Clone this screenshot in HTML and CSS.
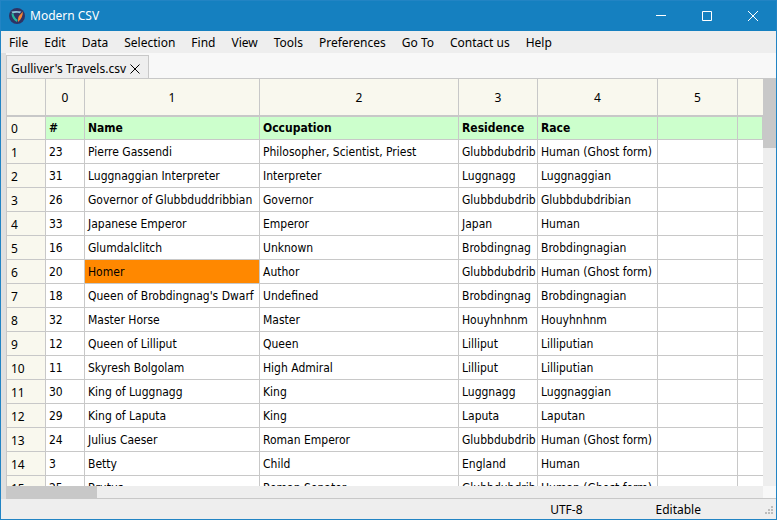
FILE: index.html
```html
<!DOCTYPE html>
<html lang="en">
<head>
  <meta charset="UTF-8" />
  <meta name="viewport" content="width=device-width, initial-scale=1.0"/>
  <title>Modern CSV</title>
  <link rel="stylesheet" href="styles.css">
</head>

<body>
  <!-- Title bar -->
  <header class="title-bar">
    <svg class="logo" viewBox="0 0 16 16" aria-hidden="true">
      <circle cx="8" cy="8" r="8" fill="#2f3263"/>
      <path d="M2.4 3.6 C5.6 2.6 9.4 2.8 12.4 3.6 L10.8 5.2 C8.2 4.6 5.6 4.6 3.8 5.4 Z" fill="#8ec5d8"/>
      <path d="M2.4 5.4 L4.4 5.4 C5 8.4 6.6 10.6 8.6 11.8 L8 14 C4.8 12.4 2.8 9 2.4 5.4 Z" fill="#25b59c"/>
      <path d="M13.8 3.6 C14 7.6 12.4 11.6 9 14 C9.2 11.2 8.8 9.4 10.4 7.6 C11.8 6 12.6 5.4 13.8 3.6 Z" fill="#f58634"/>
    </svg>
    <h1>Modern CSV</h1>
    <div class="window-buttons">
      <button type="button" aria-label="Minimize"><svg viewBox="0 0 10 10"><path d="M0 4.5H10"/></svg></button>
      <button type="button" aria-label="Maximize"><svg viewBox="0 0 10 10"><path d="M.5 .5H9.5V9.5H.5Z"/></svg></button>
      <button type="button" aria-label="Close"><svg viewBox="0 0 10 10"><path d="M0 0L10 10M10 0L0 10"/></svg></button>
    </div>
  </header>

  <nav class="menu">
    <button type="button">File</button>
    <button type="button">Edit</button>
    <button type="button">Data</button>
    <button type="button">Selection</button>
    <button type="button">Find</button>
    <button type="button">View</button>
    <button type="button">Tools</button>
    <button type="button">Preferences</button>
    <button type="button">Go To</button>
    <button type="button">Contact us</button>
    <button type="button">Help</button>
  </nav>

  <main class="workspace">
    <div class="tabs">
      <div class="tab">
        <span>Gulliver's Travels.csv</span>
        <button type="button" aria-label="Close tab"><svg viewBox="0 0 10 10"><path d="M.5 .5L9.5 9.5M9.5 .5L.5 9.5"/></svg></button>
      </div>
    </div>

    <div class="sheet">
      <div class="grid">
        <table>
          <colgroup>
            <col class="c-num"><col class="c-num"><col class="c-name"><col class="c-job">
            <col class="c-home"><col class="c-race"><col class="c-empty"><col>
          </colgroup>
          <thead>
            <tr><th></th><th>0</th><th>1</th><th>2</th><th>3</th><th>4</th><th>5</th><th></th></tr>
          </thead>
          <tbody>
            <tr class="head"><th>0</th><td>#</td><td>Name</td><td>Occupation</td><td>Residence</td><td>Race</td><td></td><td></td></tr>
            <tr><th>1</th><td>23</td><td>Pierre Gassendi</td><td>Philosopher, Scientist, Priest</td><td>Glubbdubdrib</td><td>Human (Ghost form)</td><td></td><td></td></tr>
            <tr><th>2</th><td>31</td><td>Luggnaggian Interpreter</td><td>Interpreter</td><td>Luggnagg</td><td>Luggnaggian</td><td></td><td></td></tr>
            <tr><th>3</th><td>26</td><td>Governor of Glubbduddribbian</td><td>Governor</td><td>Glubbdubdrib</td><td>Glubbdubdribian</td><td></td><td></td></tr>
            <tr><th>4</th><td>33</td><td>Japanese Emperor</td><td>Emperor</td><td>Japan</td><td>Human</td><td></td><td></td></tr>
            <tr><th>5</th><td>16</td><td>Glumdalclitch</td><td>Unknown</td><td>Brobdingnag</td><td>Brobdingnagian</td><td></td><td></td></tr>
            <tr><th>6</th><td>20</td><td class="selected">Homer</td><td>Author</td><td>Glubbdubdrib</td><td>Human (Ghost form)</td><td></td><td></td></tr>
            <tr><th>7</th><td>18</td><td>Queen of Brobdingnag's Dwarf</td><td>Undefined</td><td>Brobdingnag</td><td>Brobdingnagian</td><td></td><td></td></tr>
            <tr><th>8</th><td>32</td><td>Master Horse</td><td>Master</td><td>Houyhnhnm</td><td>Houyhnhnm</td><td></td><td></td></tr>
            <tr><th>9</th><td>12</td><td>Queen of Lilliput</td><td>Queen</td><td>Lilliput</td><td>Lilliputian</td><td></td><td></td></tr>
            <tr><th>10</th><td>11</td><td>Skyresh Bolgolam</td><td>High Admiral</td><td>Lilliput</td><td>Lilliputian</td><td></td><td></td></tr>
            <tr><th>11</th><td>30</td><td>King of Luggnagg</td><td>King</td><td>Luggnagg</td><td>Luggnaggian</td><td></td><td></td></tr>
            <tr><th>12</th><td>29</td><td>King of Laputa</td><td>King</td><td>Laputa</td><td>Laputan</td><td></td><td></td></tr>
            <tr><th>13</th><td>24</td><td>Julius Caeser</td><td>Roman Emperor</td><td>Glubbdubdrib</td><td>Human (Ghost form)</td><td></td><td></td></tr>
            <tr><th>14</th><td>3</td><td>Betty</td><td>Child</td><td>England</td><td>Human</td><td></td><td></td></tr>
            <tr><th>15</th><td>25</td><td>Brutus</td><td>Roman Senator</td><td>Glubbdubdrib</td><td>Human (Ghost form)</td><td></td><td></td></tr>
          </tbody>
        </table>
      </div>
      <div class="scroll-y"><div class="thumb"></div></div>
      <div class="scroll-x"><div class="thumb"></div></div>
      <div class="corner"></div>
    </div>
  </main>

  <footer class="status">
    <span class="encoding">UTF-8</span>
    <span class="mode">Editable</span>
    <svg class="grip" viewBox="0 0 8 8" aria-hidden="true">
      <path d="M6 0h2v2H6zM3 3h2v2H3zM6 3h2v2H6zM0 6h2v2H0zM3 6h2v2H3zM6 6h2v2H6z" fill="#bcbcbc"/>
    </svg>
  </footer>
</body>
</html>
```
FILE: styles.css
```css
/*
  Colors:
  - window frame and title bar: #1580c0
  - bars: #eeeeee, grid lines: #c8c8c8
  - headings: #f9f8ee, first row: #ccffcc, selected cell: #ff8800
*/

* {
  box-sizing: border-box;
}

body {
  margin: 0;
  height: 100vh;
  display: flex;
  flex-direction: column;
  overflow: hidden;
  border: 1px solid #2284c4;
  background: #eeeeee;
  color: #000;
  font-family: "Noto Sans", "Open Sans", sans-serif;
  font-size: 12px;
  line-height: 16px;
}

button {
  margin: 0;
  padding: 0;
  border: none;
  background: transparent;
  color: inherit;
  font: inherit;
}

/* Title bar */
.title-bar {
  display: flex;
  align-items: center;
  height: 30px;
  flex-shrink: 0;
  padding-left: 8px;
  background: #1580c0;
  color: #fff;
}
.logo {
  width: 16px;
  height: 16px;
  margin-right: 5px;
}
.title-bar h1 {
  margin: 0;
  font-size: 12px;
  font-weight: normal;
}
.window-buttons {
  display: flex;
  margin-left: auto;
  height: 100%;
}
.window-buttons button {
  display: flex;
  align-items: center;
  justify-content: center;
  width: 46px;
}
.window-buttons svg {
  width: 10px;
  height: 10px;
  fill: none;
  stroke: #fff;
}

/* Menu */
.menu {
  display: flex;
  gap: 16px;
  height: 22px;
  flex-shrink: 0;
  padding: 2px 8px 0;
}

/* Tabs */
.workspace {
  flex: 1;
  min-height: 0;
  display: flex;
  flex-direction: column;
  border-left: 5px solid #dfdfdf;
}
.tabs {
  display: flex;
  align-items: flex-end;
  height: 25px;
  flex-shrink: 0;
  background: #f8f8f8;
}
.tab {
  display: flex;
  align-items: center;
  gap: 4px;
  height: 23px;
  padding: 4px 8px 0 4px;
  border: 1px solid #c8c8c8;
  border-bottom: none;
  background: #eeeeee;
}
.tab button,
.tab svg {
  display: block;
  width: 10px;
  height: 10px;
}
.tab svg {
  fill: none;
  stroke: #000;
}

/* Sheet and its scroll bars */
.sheet {
  flex: 1;
  min-height: 0;
  display: grid;
  grid-template-columns: 1fr 13px;
  grid-template-rows: 1fr 12px;
  border-top: 1px solid #c8c8c8;
  border-bottom: 1px solid #c8c8c8;
}
.grid {
  min-width: 0;
  min-height: 0;
  overflow: hidden;
  border-left: 1px solid #c8c8c8;
  background: #fff;
}
.scroll-x,
.scroll-y {
  background: #eeeeee;
}
.thumb {
  background: #c8c8c8;
}
.scroll-y {
  grid-column: 2;
  grid-row: 1;
}
.scroll-y .thumb {
  height: 17%;
}
.scroll-x .thumb {
  width: 12%;
  height: 100%;
}
.corner {
  background: #f8f8f8;
}

/* Table */
table {
  width: 100%;
  table-layout: fixed;
  border-collapse: separate;
  border-spacing: 0;
}
.c-num { width: 39px; }
.c-name { width: 175px; }
.c-job { width: 199px; }
.c-home { width: 79px; }
.c-race { width: 120px; }
.c-empty { width: 80px; }

th,
td {
  height: 24px;
  padding: 0 0 0 3px;
  border-right: 1px solid #c8c8c8;
  border-bottom: 1px solid #c8c8c8;
  text-align: left;
  white-space: nowrap;
}
td {
  font-family: "DejaVu Sans Condensed", "Open Sans", sans-serif;
}
th {
  background: #f9f8ee;
  font-weight: normal;
}
th:last-child,
td:last-child {
  border-right: none;
}
thead th {
  height: 38px;
  padding: 2px 0 0;
  border-bottom-width: 2px;
  text-align: center;
}
tbody th {
  padding: 2px 0 0 4px;
}
.head th,
.head td {
  height: 23px;
}
.head td {
  background: #ccffcc;
  font-weight: bold;
}
.head td:last-child {
  border-right: 1px solid #c8c8c8;
}
.selected {
  background: #ff8800;
}

/* Status bar */
.status {
  display: flex;
  align-items: center;
  height: 20px;
  flex-shrink: 0;
  padding: 2px 3px 0 0;
}
.encoding {
  margin-left: auto;
}
.mode {
  margin: 0 64px 0 73px;
}
.grip {
  width: 8px;
  height: 8px;
}
```
